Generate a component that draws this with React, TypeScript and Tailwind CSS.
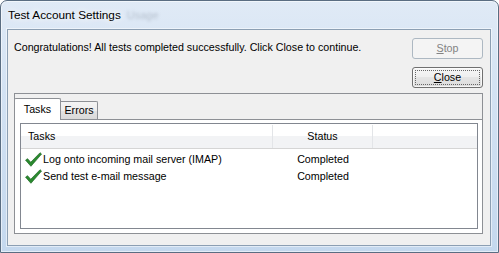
import React from 'react'

function Check() {
  return (
    <svg width="17" height="15" viewBox="0 0 16 14" className="shrink-0">
      <path d="M0.5 7.6 L2.4 6.2 L5.4 9.6 L14.2 0.6 L15.6 1.9 L5.6 13.4 Z" fill="#2a8a2e" stroke="#16601c" strokeWidth="0.6" strokeLinejoin="round" />
    </svg>
  )
}

const tasks = [
  { name: 'Log onto incoming mail server (IMAP)', status: 'Completed' },
  { name: 'Send test e-mail message', status: 'Completed' },
]

export default function App() {
  return (
    <div className="h-[253px] w-[499px] overflow-hidden bg-white font-['Liberation_Sans',Arial,sans-serif] text-[10.7px] text-black">
      <div className="flex h-full flex-col rounded-t-[7px] border border-[#5a6d82] bg-[linear-gradient(to_bottom,#e0eaf6_0%,#d3e2f3_35%,#c4d8ee_100%)] shadow-[inset_0_0_0_1px_rgba(255,255,255,0.55)]">
        {/* title bar */}
        <div className="flex h-[28px] items-center pl-[7px] pt-[1px]">
          <span className="text-[11.8px] [text-shadow:0_0_6px_#fff,0_0_10px_#fff]">Test Account Settings</span>
          <span className="ml-[6px] text-[11px] text-[#8b96a4] opacity-50 blur-[1.4px]">Usage</span>
        </div>

        {/* client area */}
        <div className="ml-[6px] mr-[7px] flex h-[217px] flex-col border border-[#8c9fb3] bg-[#f0f0f0] shadow-[0_0_0_1px_rgba(255,255,255,0.5)]">
          <div className="flex justify-between pl-[6px] pr-[7px] pt-[8px]">
            <p className="mt-[2px] leading-[15px]">
              Congratulations! All tests completed successfully. Click Close to continue.
            </p>
            <div className="flex flex-col gap-[8px]">
              <div className="flex h-[21px] w-[71px] items-center justify-center rounded-[3px] border border-[#adb8c2] bg-[#f4f4f4] text-[#838383]">
                <span>
                  <span className="underline">S</span>top
                </span>
              </div>
              <div className="relative flex h-[21px] w-[71px] items-center justify-center rounded-[3px] border border-[#707070] bg-[linear-gradient(to_bottom,#f6f6f6_0%,#efefef_49%,#e5e5e5_50%,#dcdcdc_100%)] shadow-[inset_0_0_0_1px_rgba(255,255,255,0.7)]">
                <div className="absolute inset-[2px] border border-dotted border-[#666]" />
                <span>
                  <span className="underline">C</span>lose
                </span>
              </div>
            </div>
          </div>

          {/* tab frame */}
          <div className="ml-[6px] mr-[7px] mt-[5px] flex h-[141px] flex-col border border-[#8d9095] pt-[4px]">
            <div className="-ml-px flex h-[21px]">
              <div className="relative z-10 flex h-[22px] w-[47px] items-center justify-center rounded-t-[2px] border-x border-t border-[#8d9095] bg-white">
                Tasks
              </div>
              <div className="mt-[3px] flex h-[18px] w-[37px] items-center justify-center rounded-tr-[2px] border-r border-t border-[#8d9095] bg-[linear-gradient(to_bottom,#f4f4f4_0%,#ededed_50%,#e3e3e3_51%,#d9d9d9_100%)]">
                Errors
              </div>
            </div>

            <div className="flex flex-1 flex-col border-t border-[#8d9095] bg-white pb-[4px] pl-[5px] pr-[4px] pt-[3px]">
              <div className="flex flex-1 flex-col border border-[#828790] bg-white">
                <div className="flex h-[25px] border-b border-[#d5d5d5] bg-[linear-gradient(to_bottom,#ffffff_0%,#ffffff_50%,#f2f3f5_50%,#f2f3f5_100%)] pt-[1px]">
                  <div className="flex w-[252px] items-center border-r border-[#e3e5e8] pl-[7px]">Tasks</div>
                  <div className="flex w-[100px] items-center justify-center border-r border-[#e3e5e8]">Status</div>
                  <div className="flex-1" />
                </div>
                <div className="pt-[2px]">
                  {tasks.map((t) => (
                    <div key={t.name} className="flex h-[17px] items-center">
                      <div className="flex w-[252px] items-center gap-[1px] pl-[4px]">
                        <Check />
                        <span>{t.name}</span>
                      </div>
                      <div className="w-[100px] text-center">{t.status}</div>
                    </div>
                  ))}
                </div>
              </div>
            </div>
          </div>
        </div>
      </div>
    </div>
  )
}
